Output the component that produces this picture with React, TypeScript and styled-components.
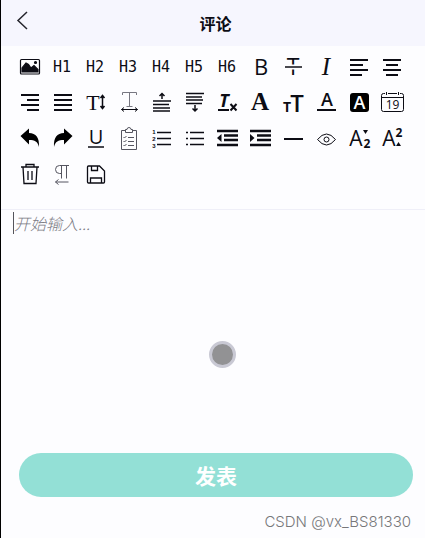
import React from "react";
import styled, { createGlobalStyle } from "styled-components";

const GlobalStyle = createGlobalStyle`
  * { box-sizing: border-box; }
  body { margin: 0; background: #fdfdff; }
  button, textarea { font: inherit; }
`;

const sans = `"Open Sans", "Noto Sans CJK SC", sans-serif`;
const serif = `"Liberation Serif", serif`;
const mono = `"DejaVu Sans Mono", monospace`;
const arial = `"Liberation Sans", sans-serif`;

const Page = styled.div`
  position: relative;
  display: flex;
  flex-direction: column;
  min-height: 100vh;
  border-left: 1px solid #000;
  background: #fdfdff;
  color: #0c0c14;
  font-family: "Noto Sans CJK SC", sans-serif;
`;

const Header = styled.header`
  display: grid;
  grid-template-columns: 40px 1fr 40px;
  align-items: center;
  height: 46px;
  padding-left: 5px;
  background: #f6f6fe;
`;

const BackButton = styled.button`
  display: flex;
  height: 40px;
  padding: 4px;
  border: 0;
  background: none;
  color: inherit;
`;

const Title = styled.h1`
  margin: 0;
  font-size: 16px;
  line-height: 24px;
  font-weight: 700;
  text-align: center;
`;

const Toolbar = styled.div`
  display: flex;
  flex-wrap: wrap;
  gap: 12px 9px;
  padding: 8px 12px 23px 17px;
  border-bottom: 1px solid #efeff8;
`;

const ToolButton = styled.button`
  width: 24px;
  height: 24px;
  padding: 0;
  border: 0;
  background: none;
  color: inherit;
`;

const Icon = styled.svg<{ $stroke?: number }>`
  display: block;
  width: 24px;
  height: 24px;
  overflow: visible;
  fill: none;
  stroke: currentColor;
  stroke-width: ${(p) => p.$stroke ?? 2};
`;

const Glyph = styled.text<{ $size: number; $family?: string; $weight?: number; $italic?: boolean; $color?: string }>`
  fill: ${(p) => p.$color ?? "currentColor"};
  stroke: none;
  text-anchor: middle;
  font-family: ${(p) => p.$family ?? sans};
  font-size: ${(p) => p.$size}px;
  font-weight: ${(p) => p.$weight ?? 400};
  font-style: ${(p) => (p.$italic ? "italic" : "normal")};
`;

const Editor = styled.div`
  position: relative;
  display: flex;
  flex: 1;
  padding: 2px 12px 0 13px;

  &::before {
    content: "";
    position: absolute;
    top: 2px;
    left: 12px;
    width: 1px;
    height: 22px;
    background: #55555c;
  }
`;

const TextArea = styled.textarea`
  flex: 1;
  padding: 0;
  border: 0;
  outline: 0;
  resize: none;
  background: none;
  font-size: 16px;
  line-height: 22px;

  &::placeholder {
    color: #7b7b84;
    font-style: italic;
    font-weight: 300;
    opacity: 1;
  }
`;

const TouchPoint = styled.span`
  position: absolute;
  top: 131px;
  left: 52%;
  width: 27px;
  height: 27px;
  margin-left: -12px;
  border: 3px solid #c9c9d4;
  border-radius: 50%;
  background: #929294;
`;

const Footer = styled.footer`
  display: flex;
  flex-direction: column;
  padding: 0 12px 4px 18px;
`;

const SubmitButton = styled.button`
  height: 44px;
  border: 0;
  border-radius: 22px;
  background: #93e0d6;
  color: #fff;
  font-size: 21px;
  line-height: 32px;
  font-weight: 700;
`;

const Credit = styled.small`
  padding: 13px 2px 0 0;
  color: #77777a;
  font-family: Inter, sans-serif;
  font-size: 15px;
  line-height: 24px;
  font-weight: 300;
  text-align: right;
`;

const heading = (level: number) => (
  <Icon viewBox="0 0 24 24">
    <Glyph $size={15} $family={mono} x="11" y="18">{`H${level}`}</Glyph>
  </Icon>
);

const lines = (d: string) => (
  <Icon viewBox="0 0 24 24"><path d={d} /></Icon>
);

const undoShape = "M2.5 10 11 2.5V7c7 .3 10.5 4.5 10 14-1.5-5.5-4-7-10-7v4.5Z";

const tools: { name: string; icon: React.ReactNode }[] = [
  { name: "Image", icon: (
    <Icon viewBox="0 0 24 24" $stroke={1.2}>
      <rect x="2.5" y="5.5" width="19" height="14.5" rx="1" />
      <path d="M4 18v-4l4-5 2.5 1.5L13 14l3-2.5 4 4V18Z" fill="currentColor" />
      <circle cx="17.5" cy="8.5" r="1" fill="currentColor" />
    </Icon>) },
  ...[1, 2, 3, 4, 5, 6].map((n) => ({ name: `Heading ${n}`, icon: heading(n) })),
  { name: "Bold", icon: (
    <Icon viewBox="0 0 24 24"><Glyph $size={22} $weight={500} x="12" y="21">B</Glyph></Icon>) },
  { name: "Strikethrough", icon: (
    <Icon viewBox="0 0 24 24">
      <Glyph $size={23} $weight={500} x="11" y="21">T</Glyph>
      <path d="M8 13h7" stroke="#fdfdff" strokeWidth="5" />
      <path d="M3 13h17" strokeWidth="1.5" />
    </Icon>) },
  { name: "Italic", icon: (
    <Icon viewBox="0 0 24 24"><Glyph $size={25} $family={serif} $italic x="11" y="21">I</Glyph></Icon>) },
  { name: "Align left", icon: lines("M2 6h18M2 11h13M2 16h18M2 21h12") },
  { name: "Align center", icon: lines("M2 6h18M5 11h12M2 16h18M5 21h12") },
  { name: "Align right", icon: lines("M3 5h18M9 10h12M3 15h18M9 20h12") },
  { name: "Justify", icon: lines("M3 5h18M3 10h18M3 15h18M3 20h18") },
  { name: "Line height", icon: (
    <Icon viewBox="0 0 24 24" $stroke={1.5}>
      <Glyph $size={22} $family={serif} x="9" y="20">T</Glyph>
      <path d="M18.5 6v12M16.5 8l2-2.5 2 2.5M16.5 16l2 2.5 2-2.5" />
    </Icon>) },
  { name: "Letter spacing", icon: (
    <Icon viewBox="0 0 24 24" $stroke={1}>
      <path d="M5.5 5V2.5h14V5M12.5 2.5v14M9.5 16.5h6" stroke="#777781" />
      <path d="M4.5 19.5h16M7 17.5l-2.5 2 2.5 2M18 17.5l2.5 2-2.5 2" />
    </Icon>) },
  { name: "Space before", icon: (
    <Icon viewBox="0 0 24 24" $stroke={1.5}>
      <path d="M3 11h18M3 14.5h16M3 18h17M3 21h17M12 9V4M9.5 6 12 3.5 14.5 6" />
    </Icon>) },
  { name: "Space after", icon: (
    <Icon viewBox="0 0 24 24" $stroke={1.5}>
      <path d="M3 3.5h18M3 7h16M3 10h17M3 13.5h16M12 15v6M9.5 18.5 12 21l2.5-2.5" />
    </Icon>) },
  { name: "Clear format", icon: (
    <Icon viewBox="0 0 24 24">
      <Glyph $size={18} $weight={700} $italic x="8" y="17">T</Glyph>
      <path d="M2 20h11M14.5 14l6 6.5M20.5 14l-6 6.5" />
    </Icon>) },
  { name: "Font family", icon: (
    <Icon viewBox="0 0 24 24"><Glyph $size={25} $family={serif} $weight={700} x="11" y="20">A</Glyph></Icon>) },
  { name: "Font size", icon: (
    <Icon viewBox="0 0 24 24">
      <Glyph $size={14} $weight={700} x="5" y="22">T</Glyph>
      <Glyph $size={24} $weight={600} x="15" y="22">T</Glyph>
    </Icon>) },
  { name: "Text color", icon: (
    <Icon viewBox="0 0 24 24">
      <Glyph $size={18} $weight={600} x="12" y="16">A</Glyph>
      <path d="M2 20h19" />
    </Icon>) },
  { name: "Background color", icon: (
    <Icon viewBox="0 0 24 24">
      <rect x="2" y="3" width="19" height="19" rx="3" fill="#000" stroke="none" />
      <Glyph $size={18} $weight={600} $color="#fff" x="11.5" y="19">A</Glyph>
    </Icon>) },
  { name: "Date", icon: (
    <Icon viewBox="0 0 24 24" $stroke={1}>
      <path d="M4 3.5H2.5a2 2 0 0 0-2 2v14a2 2 0 0 0 2 2h18a2 2 0 0 0 2-2v-14a2 2 0 0 0-2-2H19M7 3.5h9M.5 7.5h22M5.5 2v3M17.5 2v3" />
      <Glyph $size={12} x="11.5" y="19">19</Glyph>
    </Icon>) },
  { name: "Undo", icon: (
    <Icon viewBox="0 0 24 24"><path d={undoShape} fill="#000" stroke="none" /></Icon>) },
  { name: "Redo", icon: (
    <Icon viewBox="0 0 24 24"><path d={undoShape} fill="#000" stroke="none" transform="matrix(-1 0 0 1 24 0)" /></Icon>) },
  { name: "Underline", icon: (
    <Icon viewBox="0 0 24 24">
      <Glyph $size={20} $weight={500} x="12" y="18">U</Glyph>
      <path d="M4 21h16" strokeWidth="1.5" />
    </Icon>) },
  { name: "Check list", icon: (
    <Icon viewBox="0 0 24 24" $stroke={1} color="#555560">
      <path d="M8.5 4.5h-4v19h15v-19h-4M8.5 6.5v-3H10a2 2 0 0 1 4 0h1.5v3ZM11 11.5h6M11 15.5h6M11 19.5h6M6.5 11l1 1 2-2M6.5 15l1 1 2-2M6.5 19l1 1 2-2" />
    </Icon>) },
  { name: "Ordered list", icon: (
    <Icon viewBox="0 0 24 24" $stroke={1.5}>
      <path d="M7 6.5h14M7 12.5h14M7 18.5h14" />
      <Glyph $size={6} $family={arial} $weight={700} x="4" y="8">1</Glyph>
      <Glyph $size={6} $family={arial} $weight={700} x="4" y="15">2</Glyph>
      <Glyph $size={6} $family={arial} $weight={700} x="4" y="22">3</Glyph>
    </Icon>) },
  { name: "Bullet list", icon: (
    <Icon viewBox="0 0 24 24" $stroke={1.5}>
      <path d="M7 6.5h14M7 12.5h14M7 18.5h14M3 6.5h2M3 12.5h2M3 18.5h2" />
    </Icon>) },
  { name: "Outdent", icon: (
    <Icon viewBox="0 0 24 24" $stroke={2.5}>
      <path d="M1 5h21M8 9.5h14M8 14h14M1 19h21" />
      <path d="M1 12l4.5-4v8Z" fill="currentColor" stroke="none" />
    </Icon>) },
  { name: "Indent", icon: (
    <Icon viewBox="0 0 24 24" $stroke={2.5}>
      <path d="M1 5h21M8 9.5h14M8 14h14M1 19h21" />
      <path d="M5.5 12 1 8v8Z" fill="currentColor" stroke="none" />
    </Icon>) },
  { name: "Divider", icon: lines("M2 13h19") },
  { name: "Preview", icon: (
    <Icon viewBox="0 0 24 24" $stroke={1}>
      <path d="M2.5 13.5Q7 8 11.5 8t9 5.5Q16 19 11.5 19t-9-5.5Z" />
      <circle cx="11.5" cy="13.5" r="2.5" />
    </Icon>) },
  { name: "Subscript", icon: (
    <Icon viewBox="0 0 24 24">
      <Glyph $size={21} $weight={500} x="8" y="20">A</Glyph>
      <Glyph $size={12} $weight={700} x="19" y="22">2</Glyph>
      <path d="M15 4h5l-2.5 4Z" fill="currentColor" stroke="none" />
    </Icon>) },
  { name: "Superscript", icon: (
    <Icon viewBox="0 0 24 24">
      <Glyph $size={21} $weight={500} x="8" y="20">A</Glyph>
      <Glyph $size={12} $weight={700} x="18" y="11">2</Glyph>
      <path d="M15 20h5l-2.5-4Z" fill="currentColor" stroke="none" />
    </Icon>) },
  { name: "Clear", icon: (
    <Icon viewBox="0 0 24 24" $stroke={1.3}>
      <path d="M3 5h18M8 5V2.5h8V5M5 5l1 16.5h12L19 5M10 9v9M14 9v9" />
    </Icon>) },
  { name: "Text direction", icon: (
    <Icon viewBox="0 0 24 24" $stroke={1} color="#555560">
      <path d="M18 3.5H8.5a4 4 0 0 0 0 8h2M10.5 3.5v13M15.5 3.5v13M4.5 20h13M7.5 17.5l-3 2.5 3 2.5" />
    </Icon>) },
  { name: "Save", icon: (
    <Icon viewBox="0 0 24 24" $stroke={1.3}>
      <path d="M4.5 4h11L20.5 9v11a1 1 0 0 1-1 1h-15a1 1 0 0 1-1-1V5a1 1 0 0 1 1-1ZM7.5 4v4.5h6V4M6.5 21v-5h11v5" />
    </Icon>) },
];

export default function App() {
  return (
    <>
      <GlobalStyle />
      <Page>
        <Header>
          <BackButton aria-label="返回">
            <svg width="24" height="32" viewBox="0 0 24 32" fill="none" stroke="#24242c" strokeWidth="1.5">
              <path d="M17 5 8 13.5l9 8.5" />
            </svg>
          </BackButton>
          <Title>评论</Title>
        </Header>
        <Toolbar role="toolbar" aria-label="编辑工具">
          {tools.map((tool) => (
            <ToolButton key={tool.name} type="button" aria-label={tool.name}>
              {tool.icon}
            </ToolButton>
          ))}
        </Toolbar>
        <Editor>
          <TextArea aria-label="评论内容" placeholder="开始输入..." />
          <TouchPoint />
        </Editor>
        <Footer>
          <SubmitButton type="submit">发表</SubmitButton>
          <Credit>CSDN @vx_BS81330</Credit>
        </Footer>
      </Page>
    </>
  );
}
